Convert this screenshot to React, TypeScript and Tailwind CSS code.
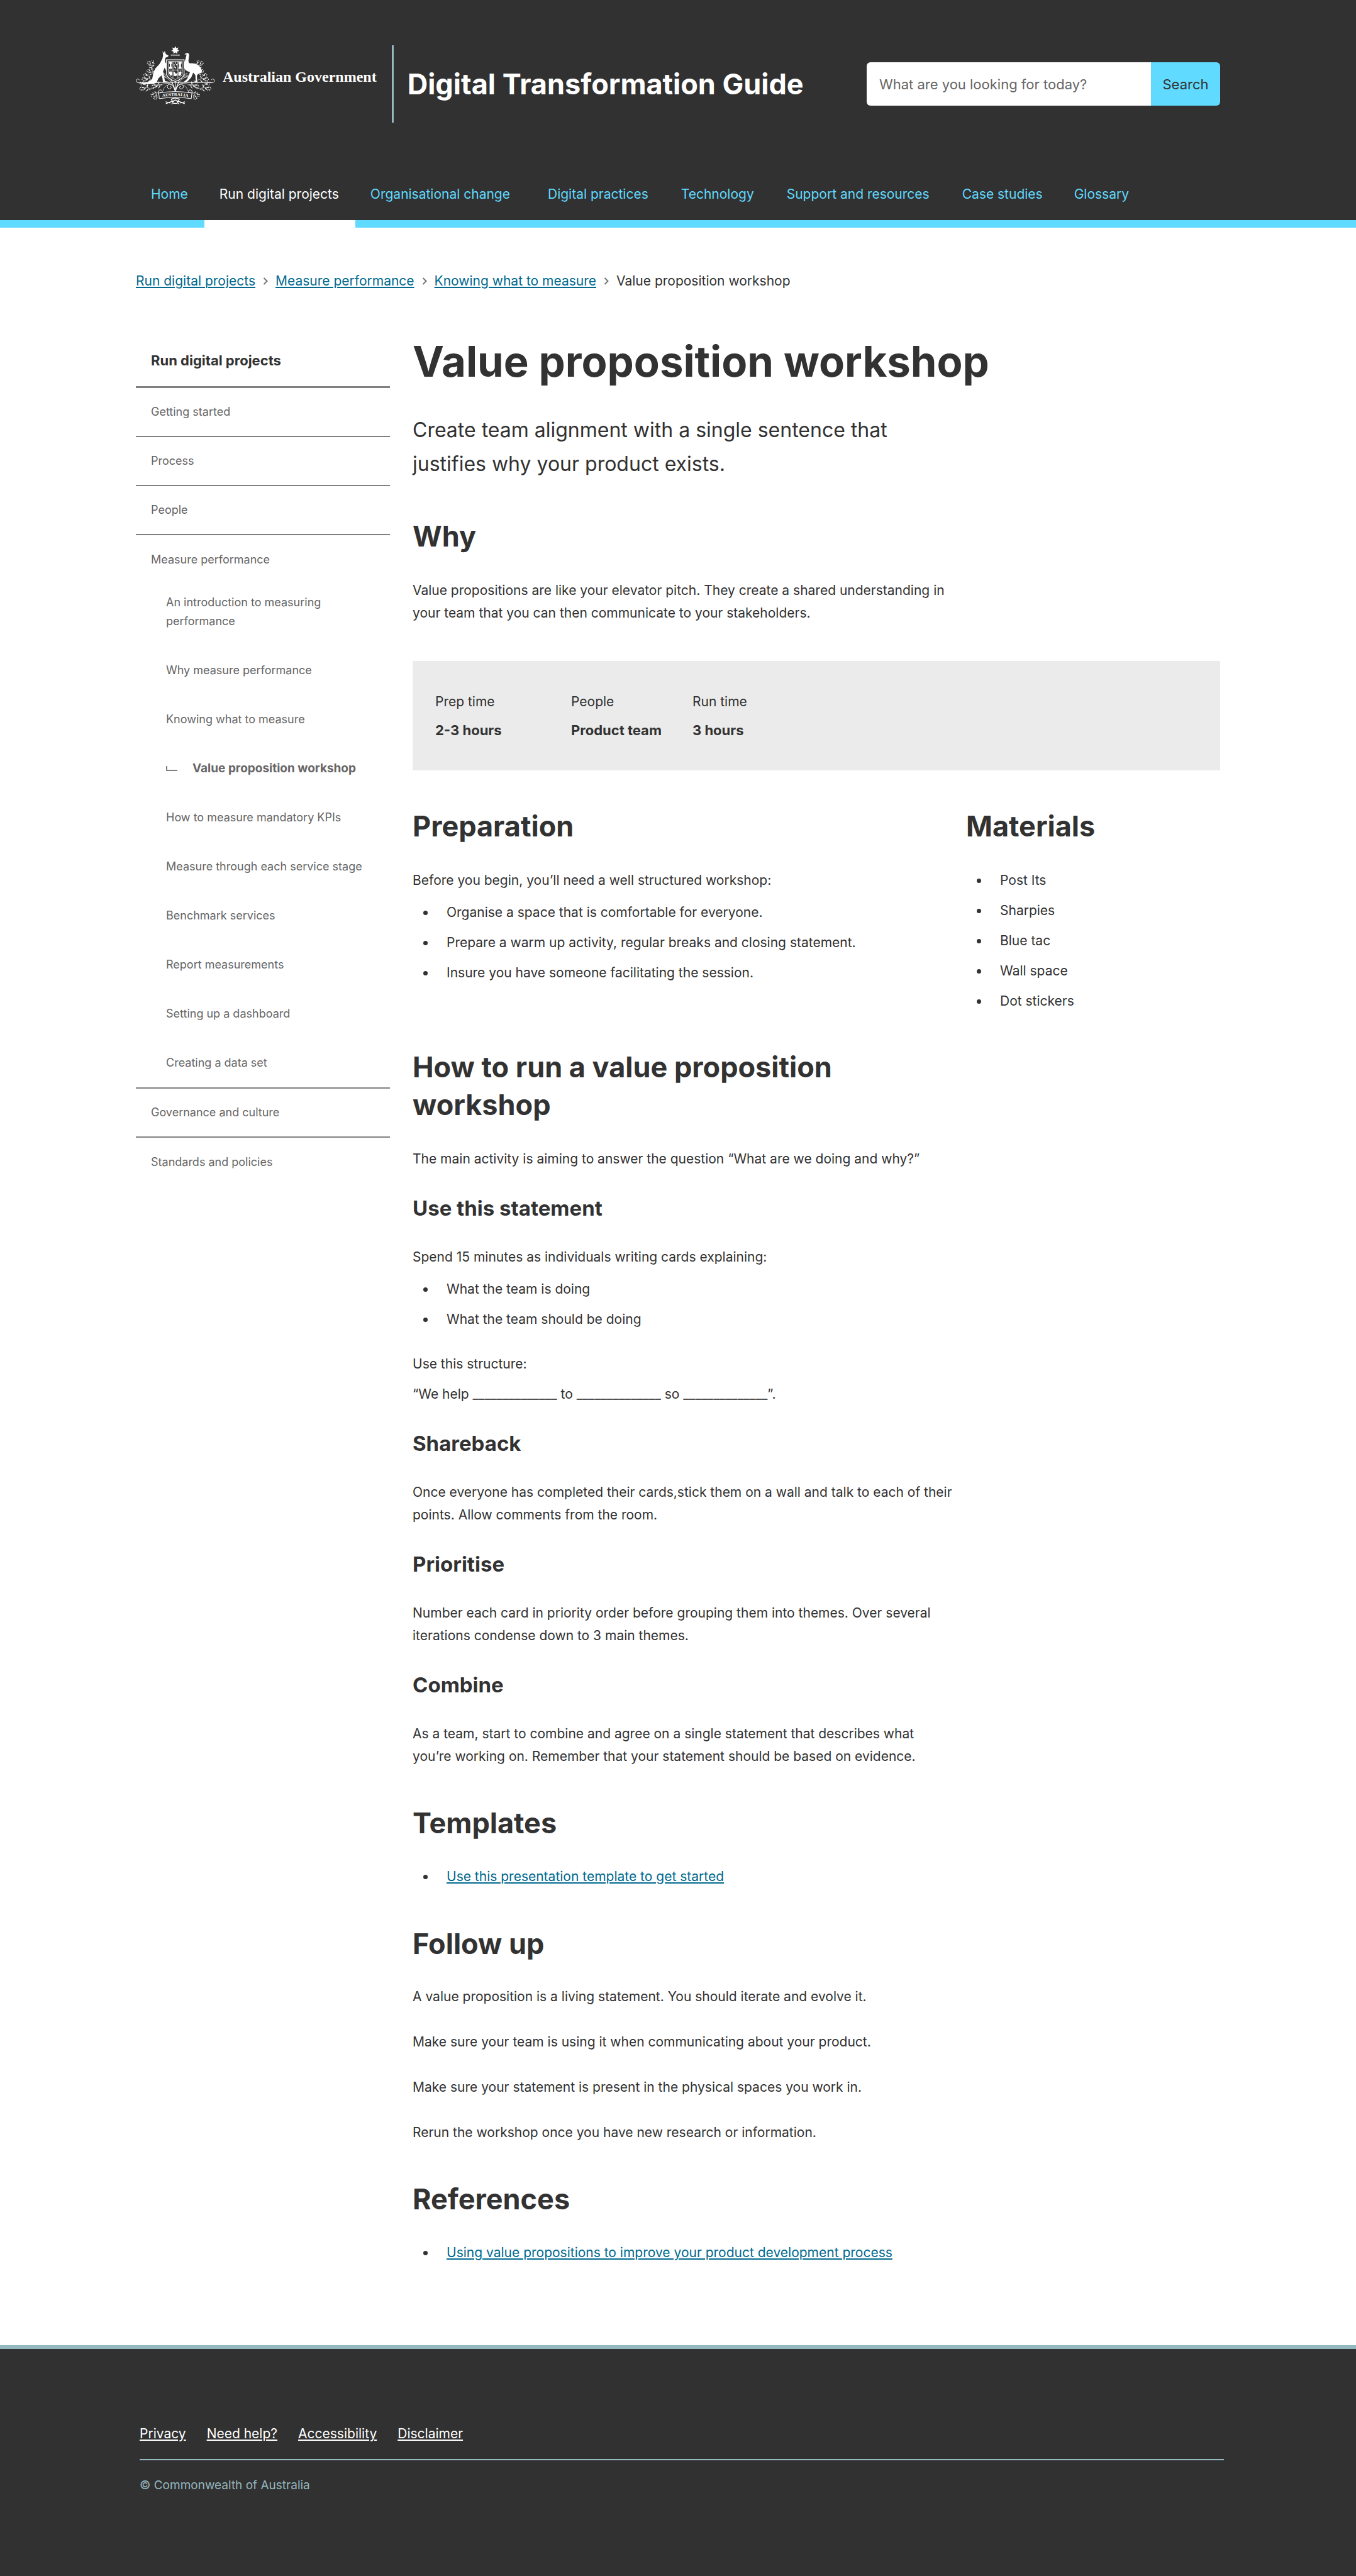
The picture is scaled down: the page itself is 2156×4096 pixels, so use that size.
import type { ReactNode } from 'react';

const NAV = [
  { label: 'Home', pad: 'pr-[26px]' },
  { label: 'Run digital projects', pad: 'pr-[26px]' },
  { label: 'Organisational change', pad: 'pr-[36px]' },
  { label: 'Digital practices', pad: 'pr-7' },
  { label: 'Technology', pad: 'pr-7' },
  { label: 'Support and resources', pad: 'pr-7' },
  { label: 'Case studies', pad: 'pr-[26px]' },
  { label: 'Glossary', pad: 'pr-[26px]' },
];

const CRUMBS = ['Run digital projects', 'Measure performance', 'Knowing what to measure'];

const SUBPAGES = [
  'Why measure performance',
  'Knowing what to measure',
  'Value proposition workshop',
  'How to measure mandatory KPIs',
  'Measure through each service stage',
  'Benchmark services',
  'Report measurements',
  'Setting up a dashboard',
  'Creating a data set',
];

const FACTS = [
  { label: 'Prep time', value: '2-3 hours', width: 'w-[216px]' },
  { label: 'People', value: 'Product team', width: 'w-[193px]' },
  { label: 'Run time', value: '3 hours', width: 'w-[200px]' },
];

/* One sprig of wattle: stem, leaves and blossoms. */
function Sprig() {
  return (
    <g>
      <path d="M0 0C-18 -6 -34 -8 -52 -4M-18 -5C-26 -16 -30 -26 -46 -34M-30 -6C-40 4 -48 8 -62 10" fill="none" stroke="#fff" strokeWidth="2.2" />
      <path d="M-22 -8q-2 -14 4 -20q6 12 -4 20zM-34 -20q-12 -2 -14 -12q12 0 14 12zM-38 -5q-10 -8 -20 -2q10 8 20 2zM-28 -4q-4 12 -14 14q2 -12 14 -14zM-12 -3q-8 10 -18 22q16 -4 18 -22z" fill="#fff" />
      <g fill="#fff">
        <circle cx="-50" cy="-36" r="3.4" />
        <circle cx="-58" cy="-26" r="3" />
        <circle cx="-44" cy="-24" r="3" />
        <circle cx="-62" cy="-6" r="3.4" />
        <circle cx="-66" cy="4" r="3" />
        <circle cx="-56" cy="14" r="3" />
        <circle cx="-46" cy="12" r="2.6" />
        <circle cx="-54" cy="-14" r="2.6" />
        <circle cx="-32" cy="-32" r="2.6" />
      </g>
    </g>
  );
}

function HalfFoliage() {
  return (
    <g>
      <g transform="translate(126 196) rotate(38) scale(.8)"><Sprig /></g>
      <g transform="translate(118 160) rotate(62) scale(.85)"><Sprig /></g>
      <g transform="translate(118 228) rotate(6)"><Sprig /></g>
      <g transform="translate(106 284) rotate(2) scale(1.05)"><Sprig /></g>
      <g transform="translate(180 262) rotate(-6)"><Sprig /></g>
      <g transform="translate(160 300) rotate(-60) scale(.9)"><Sprig /></g>
      <g transform="translate(214 208) rotate(8) scale(.55)"><Sprig /></g>
      <path d="M262 290C248 262 240 250 214 250C186 252 160 262 96 292" fill="none" stroke="#fff" strokeWidth="3" />
      <path d="M262 284C246 248 226 216 184 206" fill="none" stroke="#fff" strokeWidth="3" />
      <path d="M262 298C256 276 246 258 228 256C208 256 208 284 226 286C240 286 242 270 230 269" fill="none" stroke="#fff" strokeWidth="4" />
      <path d="M214 262C196 270 186 282 186 300" fill="none" stroke="#fff" strokeWidth="2.5" />
    </g>
  );
}

function CoatOfArms() {
  return (
    <svg viewBox="12 8 506 380" className="h-[95px] w-[126px] shrink-0" role="img" aria-label="Commonwealth Coat of Arms">
      <HalfFoliage />
      <g transform="translate(528 0) scale(-1 1)"><HalfFoliage /></g>

      <path d="M264 12l6 13l14-4l-6 13l12 9l-14 3l0 15l-12-9l-12 9l0-15l-14-3l12-9l-6-13l14 4z" fill="#fff" />
      <rect x="236" y="67" width="56" height="6" fill="#fff" />
      <path d="M246 70h5M259 70h5M273 70h5" stroke="#313131" strokeWidth="3" />

      <path d="M182 44l10 14l4-16l8 22l16 8l-2 8l-18 8l-2 26l12 14l-2 20l6 20l-8 4l-10-22l-10 24l6 30l6 32l24 4v4h-36l-8-46l-22 20l-12 28l-20 8l-84 2l-8-4l56-8l28-20l8-42l12-26l28-30l18-34l4-22z" fill="#fff" />
      <path d="M324 66q4-10 16-10q12 0 12 16l-4 32q-1 16 10 19q30-4 54 12q20 18 22 42l-6 8l-18 3l-8 14l2 38l12 4h-32l10-6l-2-40l-14-16l-12 30l-24 26l-16 6h-12l26-22l18-44q-32-6-38-30q-6-22 6-42l10-40q-4-2-14 2z" fill="#fff" />

      <path d="M208 100h112v92q-6 28-56 46q-50-18-56-46z" fill="#313131" stroke="#fff" strokeWidth="5" />
      <path d="M219 110h90v80q-6 20-45 36q-39-16-45-36z" fill="none" stroke="#fff" strokeWidth="3" />
      <path d="M249 110v106M280 110v106M219 165h90" stroke="#fff" strokeWidth="3" />
      <g fill="#fff">
        <path d="M224 114h20v12h-5v18h5v14h-20v-14h5v-18h-5z" />
        <circle cx="264" cy="120" r="4" /><circle cx="257" cy="133" r="4" /><circle cx="272" cy="131" r="4" /><circle cx="264" cy="150" r="5" /><circle cx="258" cy="144" r="3" />
        <path d="M284 114h20v10l-4 6v14l4 6v8h-20v-8l4-6v-14l-4-6z" />
        <path d="M223 172l8 6l4-6l9 6v20l-10 4l-9-12z" />
        <path d="M253 180q6-10 10 4q6 8 13 0v14q-12 12-22 2z" />
        <path d="M284 174l8 4l8-6l4 8l-4 18l-12 6l-5-8z" />
      </g>

      <path d="M38 244H490" stroke="#fff" strokeWidth="5" />
      <path d="M44 246C22 250 12 240 15 230C18 220 32 220 34 230" fill="none" stroke="#fff" strokeWidth="4" />
      <path d="M484 246C506 250 516 240 513 230C510 220 496 220 494 230" fill="none" stroke="#fff" strokeWidth="4" />
      <path d="M264 240V306M236 220L262 296M292 220L266 296" stroke="#fff" strokeWidth="4" fill="none" />

      <path d="M158 312q106-18 212 0l-4 36q-104-16-204 0z" fill="#313131" stroke="#fff" strokeWidth="4" />
      <path d="M158 312q-4-20 12-20q14 2 10 16q-8 6-12-4M370 312q4-20-12-20q-14 2-10 16q8 6 12-4" fill="none" stroke="#fff" strokeWidth="4" />
      <path id="scroll-line" d="M170 339q94-16 188 0" fill="none" />
      <text fill="#fff" fontFamily="Liberation Serif, serif" fontWeight="700" fontSize="28" textAnchor="middle">
        <textPath href="#scroll-line" startOffset="50%">AUSTRALIA</textPath>
      </text>
      <path d="M264 344l-26 6l8 16l18-10l18 10l8-16zM250 362l-46 18M278 362l46 18M254 364l-14 20M274 364l14 20M250 378h28M202 368l30 8M326 368l-30 8" fill="none" stroke="#fff" strokeWidth="5" />
    </svg>
  );
}

function Chevron() {
  return (
    <svg viewBox="0 0 8 12" className="h-3 w-2 shrink-0" fill="none" stroke="#767676" strokeWidth="2" aria-hidden="true">
      <path d="M1.5 1L6.5 6L1.5 11" />
    </svg>
  );
}

function Bullets({ items, className }: { items: ReactNode[]; className: string }) {
  return (
    <ul className={className}>
      {items.map((item, i) => (
        <li key={i} className="flex items-center pl-[17px] leading-[48px]">
          <span className="mr-[30px] size-[7px] shrink-0 rounded-full bg-[#323232]" aria-hidden="true" />
          <span>{item}</span>
        </li>
      ))}
    </ul>
  );
}

function H2({ children, className }: { children: ReactNode; className: string }) {
  return <h2 className={`text-[45px] leading-[60px] font-bold ${className}`}>{children}</h2>;
}

function H3({ children }: { children: ReactNode }) {
  return <h3 className="mt-9 text-[33px] leading-[48px] font-bold">{children}</h3>;
}

function Link({ children }: { children: ReactNode }) {
  return (
    <a href="#" className="text-[#00698f] underline decoration-2 underline-offset-2">
      {children}
    </a>
  );
}

export default function App() {
  return (
    <div className="flex min-h-screen flex-col bg-white font-['Inter',sans-serif] text-[21px] leading-9 text-[#323232]">
      <header className="bg-[#313131] pt-[72px]">
        <div className="mx-auto flex min-h-[123px] w-full max-w-[1724px] items-center">
          <a href="#" className="flex gap-3 self-start">
            <CoatOfArms />
            <span className="mt-8 font-['Liberation_Serif',serif] text-2xl leading-9 font-bold whitespace-nowrap text-white">
              Australian Government
            </span>
          </a>
          <div className="ml-6 w-[3px] self-stretch bg-[#95b7bf]" />
          <p className="ml-[22px] text-[45px] leading-[60px] font-bold whitespace-nowrap text-white">Digital Transformation Guide</p>
          <form role="search" className="ml-auto flex h-[69px] w-[562px] text-[22px]" onSubmit={(e) => e.preventDefault()}>
            <input
              type="text"
              aria-label="Search the guide"
              placeholder="What are you looking for today?"
              className="min-w-0 flex-1 rounded-l-md bg-white px-5 text-[#323232] outline-none placeholder:text-[#666]"
            />
            <button type="submit" className="w-[110px] rounded-r-md bg-[#61daff] text-[#313131]">
              Search
            </button>
          </form>
        </div>
        <nav aria-label="Main" className="mt-[73px] border-b-12 border-[#61daff]">
          <ul className="mx-auto flex w-full max-w-[1724px]">
            {NAV.map((item, i) => (
              <li key={item.label}>
                <a
                  href="#"
                  className={`block py-[23px] pl-6 ${item.pad} ${
                    i === 1 ? '-mb-3 border-b-12 border-white text-white' : 'text-[#61daff]'
                  }`}
                >
                  {item.label}
                </a>
              </li>
            ))}
          </ul>
        </nav>
      </header>

      <nav aria-label="Breadcrumb" className="mx-auto w-full max-w-[1724px] pt-[67px]">
        <ol className="flex">
          {CRUMBS.map((item) => (
            <li key={item} className="flex items-center">
              <Link>{item}</Link>
              <span className="mx-3">
                <Chevron />
              </span>
            </li>
          ))}
          <li>Value proposition workshop</li>
        </ol>
      </nav>

      <div className="mx-auto flex w-full max-w-[1724px] items-start gap-9 pt-[74px]">
        <nav aria-label="Section" className="w-[404px] shrink-0 text-[18px] leading-[30px] text-[#666]">
          <h2 className="flex h-[78px] items-center border-b-3 border-[#808080] pb-2 pl-6 text-[22px] font-bold text-[#323232]">
            Run digital projects
          </h2>
          <ul>
            {['Getting started', 'Process', 'People'].map((item) => (
              <li key={item} className="flex min-h-[78px] items-center border-b-2 border-[#808080] pl-6">
                <a href="#">{item}</a>
              </li>
            ))}
            <li className="border-b-2 border-[#808080]">
              <a href="#" className="flex min-h-[78px] items-center pl-6">
                Measure performance
              </a>
              <ul className="pl-12">
                <li className="pt-[14px] pb-6">
                  <a href="#" className="block max-w-[280px]">An introduction to measuring performance</a>
                </li>
                {SUBPAGES.map((item, i) => (
                  <li key={item} className="flex min-h-[78px] items-center">
                    {i === 2 ? (
                      <a href="#" aria-current="page" className="flex items-center text-[19px] font-bold">
                        <span className="mr-6 h-2 w-[18px] border-b-2 border-l-2 border-[#808080]" />
                        {item}
                      </a>
                    ) : (
                      <a href="#" className="whitespace-nowrap">{item}</a>
                    )}
                  </li>
                ))}
              </ul>
            </li>
            <li className="flex min-h-[78px] items-center border-b-2 border-[#808080] pl-6">
              <a href="#">Governance and culture</a>
            </li>
            <li className="flex min-h-[78px] items-center pl-6">
              <a href="#">Standards and policies</a>
            </li>
          </ul>
        </nav>

        <main className="min-w-0 flex-1">
          <h1 className="text-[67px] leading-[72px] font-bold">Value proposition workshop</h1>
          <p className="mt-[46px] max-w-[800px] text-[32px] leading-[54px]">
            Create team alignment with a single sentence that justifies why your product exists.
          </p>

          <H2 className="mt-[58px]">Why</H2>
          <p className="mt-[38px] max-w-[880px]">
            Value propositions are like your elevator pitch. They create a shared understanding in your team that you can
            then communicate to your stakeholders.
          </p>

          <dl className="mt-[58px] flex bg-[#ebebeb] px-9 pt-[47px] pb-[46px]">
            {FACTS.map((fact) => (
              <div key={fact.label} className={fact.width}>
                <dt>{fact.label}</dt>
                <dd className="mt-[9px] text-[22px] font-bold">{fact.value}</dd>
              </div>
            ))}
          </dl>

          <div className="mt-[59px] flex">
            <section className="flex-1">
              <H2 className="">Preparation</H2>
              <p className="mt-[38px]">Before you begin, you’ll need a well structured workshop:</p>
              <Bullets
                className="mt-[9px]"
                items={[
                  'Organise a space that is comfortable for everyone.',
                  'Prepare a warm up activity, regular breaks and closing statement.',
                  'Insure you have someone facilitating the session.',
                ]}
              />
            </section>
            <section className="w-[404px]">
              <H2 className="">Materials</H2>
              <Bullets className="mt-8" items={['Post Its', 'Sharpies', 'Blue tac', 'Wall space', 'Dot stickers']} />
            </section>
          </div>

          <H2 className="mt-[51px] max-w-[800px]">How to run a value proposition workshop</H2>
          <p className="mt-[38px] max-w-[880px]">
            The main activity is aiming to answer the question “What are we doing and why?”
          </p>

          <H3>Use this statement</H3>
          <p className="mt-9">Spend 15 minutes as individuals writing cards explaining:</p>
          <Bullets className="mt-[9px]" items={['What the team is doing', 'What the team should be doing']} />
          <p className="mt-[29px]">Use this structure:</p>
          <p className="mt-3">“We help ______________ to ______________ so ______________”.</p>

          <H3>Shareback</H3>
          <p className="mt-9 max-w-[880px]">
            Once everyone has completed their cards,stick them on a wall and talk to each of their points. Allow comments
            from the room.
          </p>

          <H3>Prioritise</H3>
          <p className="mt-9 max-w-[880px]">
            Number each card in priority order before grouping them into themes. Over several iterations condense down to
            3 main themes.
          </p>

          <H3>Combine</H3>
          <p className="mt-9 max-w-[840px]">
            As a team, start to combine and agree on a single statement that describes what you’re working on. Remember
            that your statement should be based on evidence.
          </p>

          <H2 className="mt-[58px]">Templates</H2>
          <Bullets className="mt-[31px]" items={[<Link key="t">Use this presentation template to get started</Link>]} />

          <H2 className="mt-[53px]">Follow up</H2>
          <div className="mt-9 flex flex-col gap-9">
            <p>A value proposition is a living statement. You should iterate and evolve it.</p>
            <p>Make sure your team is using it when communicating about your product.</p>
            <p>Make sure your statement is present in the physical spaces you work in.</p>
            <p>Rerun the workshop once you have new research or information.</p>
          </div>

          <H2 className="mt-[58px]">References</H2>
          <Bullets
            className="mt-[31px]"
            items={[<Link key="r">Using value propositions to improve your product development process</Link>]}
          />
        </main>
      </div>

      <footer className="mt-[123px] flex-1 border-t-6 border-[#95b7bf] bg-[#313131] pt-[117px] pb-[118px]">
        <div className="mx-auto w-full max-w-[1724px] pl-[6px]">
          <ul className="-mr-[6px] flex gap-[33px] border-b-2 border-[#95b7bf] pb-[22px]">
            {['Privacy', 'Need help?', 'Accessibility', 'Disclaimer'].map((item) => (
              <li key={item}>
                <a href="#" className="text-white underline decoration-2 underline-offset-2">{item}</a>
              </li>
            ))}
          </ul>
          <p className="mt-[22px] text-[19px] text-[#95b7bf]">© Commonwealth of Australia</p>
        </div>
      </footer>
    </div>
  );
}
